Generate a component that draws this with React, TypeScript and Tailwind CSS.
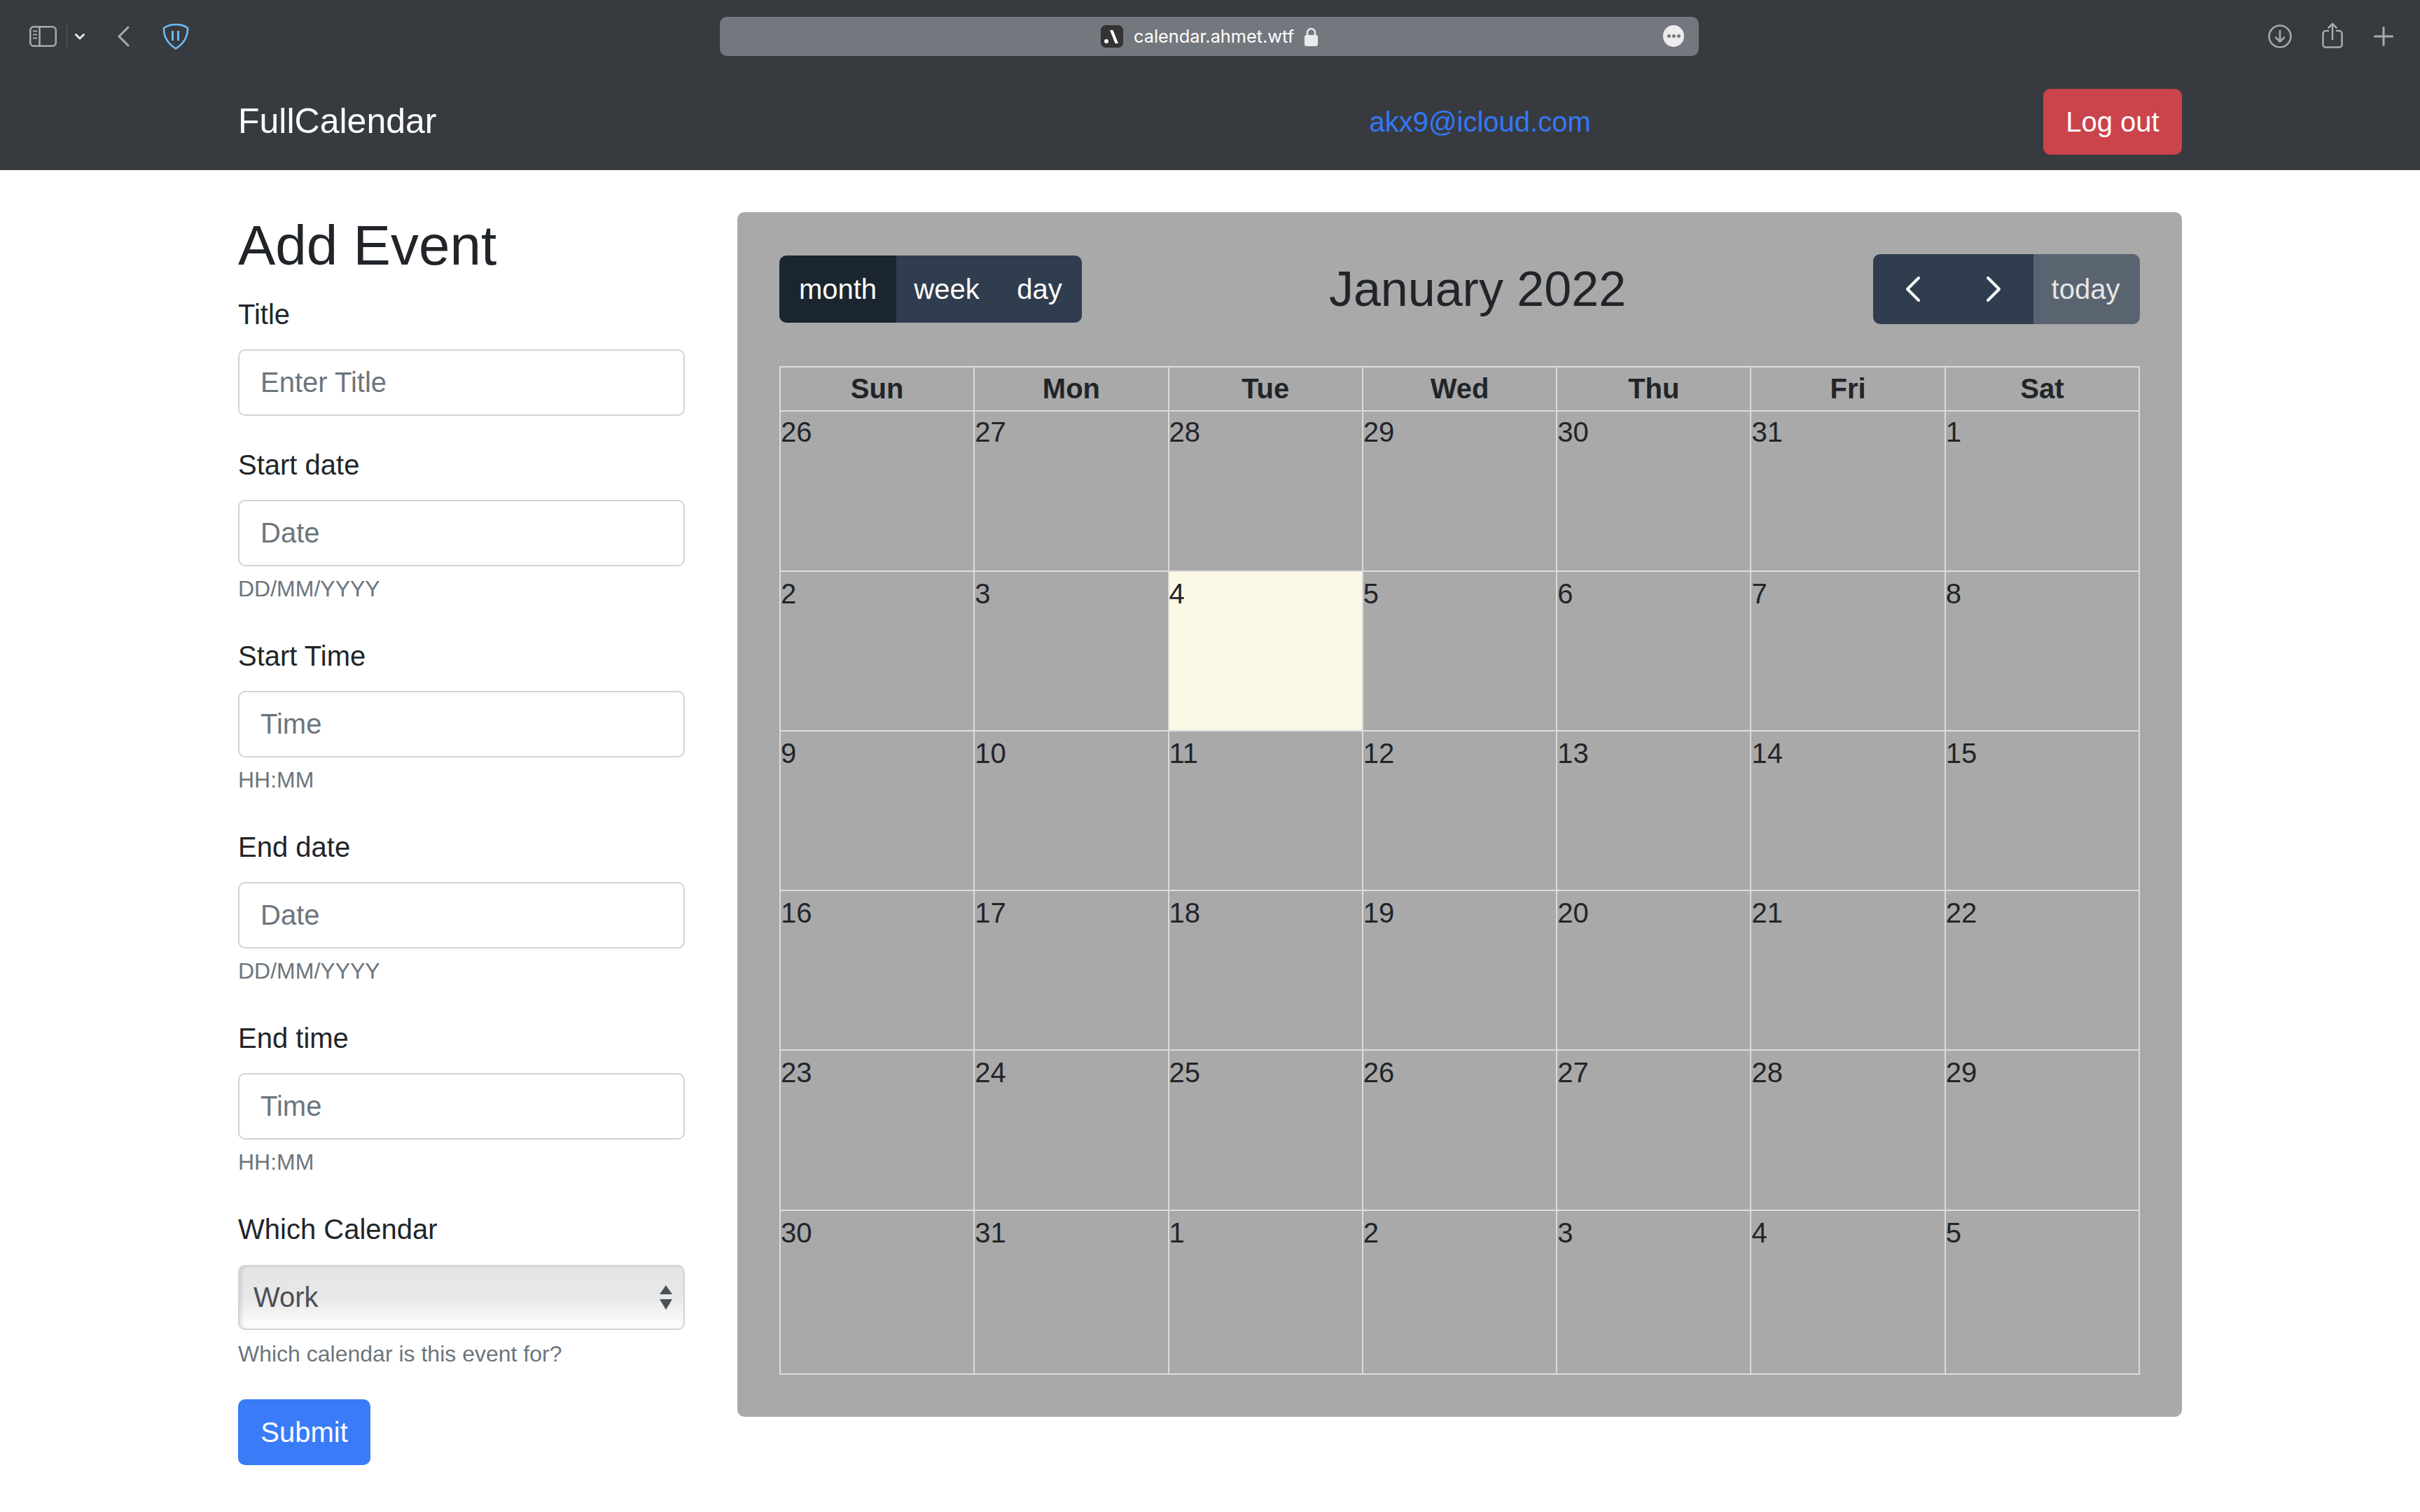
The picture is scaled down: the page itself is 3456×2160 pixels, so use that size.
const dayNames = ["Sun", "Mon", "Tue", "Wed", "Thu", "Fri", "Sat"];

const weeks = [
  [26, 27, 28, 29, 30, 31, 1],
  [2, 3, 4, 5, 6, 7, 8],
  [9, 10, 11, 12, 13, 14, 15],
  [16, 17, 18, 19, 20, 21, 22],
  [23, 24, 25, 26, 27, 28, 29],
  [30, 31, 1, 2, 3, 4, 5],
];

function Field({ label, placeholder, hint }: { label: string; placeholder: string; hint?: string }) {
  return (
    <div className={hint ? "mb-[42px]" : "mb-[40px]"}>
      <label className="mb-[20px] block text-[40px] leading-[60px]">{label}</label>
      <input
        placeholder={placeholder}
        className="block h-[95px] w-full rounded-[10px] border-2 border-[#ced4da] bg-white px-[30px] text-[40px] outline-none placeholder:text-[#6c757d]"
      />
      {hint && <small className="mt-[8px] block text-[32px] leading-[48px] text-[#6c757d]">{hint}</small>}
    </div>
  );
}

function BrowserLeftIcons() {
  return (
    <div className="flex w-[1028px] items-center pl-[42px]">
      <svg width="39" height="30" viewBox="0 0 39 30" fill="none" stroke="#a8abad" strokeWidth="2.5">
        <rect x="1.25" y="1.25" width="36.5" height="27.5" rx="5" />
        <path d="M14.5 1.5v27" />
        <path d="M5 7.5h6M5 12.5h6M5 17.5h6" strokeWidth="2" />
      </svg>
      <div className="ml-[14px] h-[36px] w-px bg-[#54585d]" />
      <svg className="ml-[11px]" width="14" height="9" viewBox="0 0 14 9" fill="none" stroke="#e4e5e5" strokeWidth="3" strokeLinecap="round" strokeLinejoin="round">
        <path d="M1.5 1.5 7 7l5.5-5.5" />
      </svg>
      <svg className="ml-[47px]" width="17" height="30" viewBox="0 0 17 30" fill="none" stroke="#a8abad" strokeWidth="3" strokeLinecap="round" strokeLinejoin="round">
        <path d="M15 2 2 15l13 13" />
      </svg>
      <svg className="ml-[47px]" width="38" height="38" viewBox="0 0 38 38" fill="none" stroke="#6cbcf8">
        <path d="M2 7c5-3.5 11-5 17-5s12 1.500 17 5c.5 11-4.500 21.500-17 29.500C6.500 28.500 1.500 18 2 7Z" strokeWidth="2.5" strokeLinejoin="round" />
        <path d="M14.500 11v14M22.500 11v14" strokeWidth="3" />
      </svg>
    </div>
  );
}

function BrowserRightIcons() {
  return (
    <div className="flex items-center pl-[813px]">
      <svg width="34" height="34" viewBox="0 0 34 34" fill="none" stroke="#a8abad" strokeWidth="2.500" strokeLinecap="round" strokeLinejoin="round">
        <circle cx="17" cy="17" r="15.500" />
        <path d="M17 9v15M11 18.500l6 6 6-6" />
      </svg>
      <svg className="ml-[43px] -translate-y-[2px]" width="30" height="37" viewBox="0 0 30 37" fill="none" stroke="#a8abad" strokeWidth="2.500" strokeLinecap="round" strokeLinejoin="round">
        <path d="M9 12H5.500a4 4 0 0 0-4 4v15.500a4 4 0 0 0 4 4h19a4 4 0 0 0 4-4V16a4 4 0 0 0-4-4H21" />
        <path d="M15 24V2M9.500 7.500 15 2l5.500 5.500" />
      </svg>
      <svg className="ml-[44px]" width="28" height="28" viewBox="0 0 28 28" fill="none" stroke="#a8abad" strokeWidth="3" strokeLinecap="round">
        <path d="M14 1.500v25M1.500 14h25" />
      </svg>
    </div>
  );
}

function AddressBar() {
  return (
    <div className="relative flex h-[56px] w-[1398px] items-center justify-center rounded-[10px] bg-[#73777e]">
      <svg width="32" height="32" viewBox="0 0 32 32">
        <rect width="32" height="32" rx="7" fill="#333333" />
        <circle cx="8" cy="23" r="3" fill="#ffffff" />
        <path d="M13 7h4.500L25 26h-4.500Z" fill="#ffffff" />
      </svg>
      <span className="ml-[15px] font-['Inter',sans-serif] text-[25.3px] leading-[32px] text-white">calendar.ahmet.wtf</span>
      <svg className="ml-[15px]" width="19" height="27" viewBox="0 0 19 27" fill="none">
        <path d="M4 12V7.500a5.500 5.500 0 0 1 11 0V12" stroke="#e9eaeb" strokeWidth="2.500" />
        <rect y="11" width="19" height="16" rx="3" fill="#e9eaeb" />
      </svg>
      <div className="absolute right-[21px] top-[12px] flex h-[31px] w-[30px] items-center justify-center gap-[2px] rounded-full bg-[#ececec]">
        <span className="h-[5px] w-[5px] rounded-full bg-[#73777e]" />
        <span className="h-[5px] w-[5px] rounded-full bg-[#73777e]" />
        <span className="h-[5px] w-[5px] rounded-full bg-[#73777e]" />
      </div>
    </div>
  );
}

function Calendar() {
  return (
    <div className="h-[1721px] flex-1 rounded-[10px] bg-[#a9a9a9] p-[60px]">
      <div className="mb-[60px] flex h-[100px] items-center justify-between">
        <div className="flex h-[96px] overflow-hidden rounded-[10px] text-[40px] text-white">
          <button className="w-[167px] bg-[#1a252f]">month</button>
          <button className="w-[144px] bg-[#2f3d4e]">week</button>
          <button className="w-[121px] bg-[#2f3d4e]">day</button>
        </div>
        <h2 className="text-[70px] leading-[84px] text-[#212529]">January 2022</h2>
        <div className="flex h-[100px] overflow-hidden rounded-[10px] text-[40px]">
          <button className="flex w-[114px] items-center justify-center bg-[#2f3d4e]">
            <svg width="22" height="38" viewBox="0 0 22 38" fill="none" stroke="#ffffff" strokeWidth="4" strokeLinecap="round" strokeLinejoin="round">
              <path d="M19 3 3 19l16 16" />
            </svg>
          </button>
          <button className="flex w-[115px] items-center justify-center bg-[#2f3d4e]">
            <svg width="22" height="38" viewBox="0 0 22 38" fill="none" stroke="#ffffff" strokeWidth="4" strokeLinecap="round" strokeLinejoin="round">
              <path d="m3 3 16 16L3 35" />
            </svg>
          </button>
          <button className="w-[152px] bg-[#5a6470] pr-[3px] text-[#e4e5e6]">today</button>
        </div>
      </div>

      <div className="grid grid-cols-7 grid-rows-[63px_229px_228px_228px_228px_229px_234px] border-r-2 border-b-2 border-[#dcdcdc] text-[40px] leading-[60px] text-[#212529]">
        {dayNames.map((name) => (
          <div key={name} className="border-t-2 border-l-2 border-[#dcdcdc] text-center font-bold">
            {name}
          </div>
        ))}
        {weeks.map((week, row) =>
          week.map((day, col) => (
            <div
              key={`${row}-${col}`}
              className={`border-t-2 border-l-2 border-[#dcdcdc] ${row === 0 ? "leading-[58px]" : "pt-px"} ${row === 1 && col === 2 ? "bg-[#fbf8e5]" : ""}`}
            >
              {day}
            </div>
          )),
        )}
      </div>
    </div>
  );
}

export default function App() {
  return (
    <div className="min-h-[2160px] bg-white font-['Liberation_Sans',sans-serif] text-[#212529]">
      <header className="flex h-[243px] flex-col bg-[#373b40]">
        <div className="flex h-[104px] pt-[24px]">
          <div className="flex h-[56px]">
            <BrowserLeftIcons />
            <AddressBar />
            <BrowserRightIcons />
          </div>
        </div>
        <nav className="flex flex-1 items-center px-[340px]">
          <a className="text-[50px] leading-[75px] text-white">FullCalendar</a>
          <a className="ml-[1332px] text-[40px] leading-[60px] text-[#3478f6]">akx9@icloud.com</a>
          <button className="ml-auto h-[94px] w-[198px] rounded-[10px] bg-[#cb444b] text-[40px] text-white">Log out</button>
        </nav>
      </header>

      <main className="flex gap-[75px] px-[340px] pt-[60px]">
        <form className="w-[638px] shrink-0">
          <h1 className="mb-[20px] text-[80px] leading-[96px]">Add Event</h1>
          <Field label="Title" placeholder="Enter Title" />
          <Field label="Start date" placeholder="Date" hint="DD/MM/YYYY" />
          <Field label="Start Time" placeholder="Time" hint="HH:MM" />
          <Field label="End date" placeholder="Date" hint="DD/MM/YYYY" />
          <Field label="End time" placeholder="Time" hint="HH:MM" />
          <div className="mb-[41px]">
            <label className="mb-[21px] block text-[40px] leading-[60px]">Which Calendar</label>
            <div className="relative">
              <select className="block h-[93px] w-full appearance-none rounded-[10px] border-2 border-[#ced4da] bg-gradient-to-b from-[#e4e4e4] via-[#e8e8e8] via-50% to-white pb-[2px] pl-[20px] text-[40px] text-[#495057] shadow-[inset_3px_0_4px_rgba(0,0,0,0.1)] outline-none">
                <option>Work</option>
              </select>
              <svg className="absolute right-[18px] top-[29px]" width="18" height="35" viewBox="0 0 18 35" fill="#495057">
                <path d="M9 0l9 13H0ZM0 20h18L9 35Z" />
              </svg>
            </div>
            <small className="mt-[10px] block text-[32px] leading-[48px] text-[#6c757d]">Which calendar is this event for?</small>
          </div>
          <button className="h-[94px] w-[189px] rounded-[10px] bg-[#3a7bf8] text-[40px] text-white">Submit</button>
        </form>
        <Calendar />
      </main>
    </div>
  );
}
